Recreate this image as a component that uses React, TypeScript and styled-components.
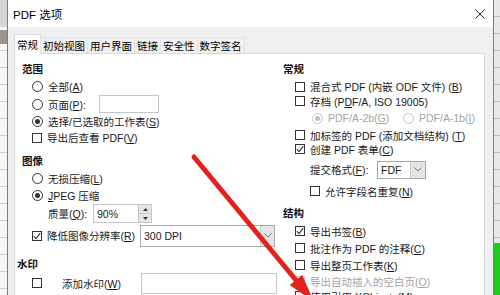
import React from "react";
import styled, { createGlobalStyle } from "styled-components";

const FONT = `"Liberation Sans", "Noto Sans CJK SC", sans-serif`;

const Global = createGlobalStyle`
  html, body { margin: 0; padding: 0; width: 500px; height: 295px; overflow: hidden; background: #fff; }
  body { font-family: ${FONT}; }
`;

const Screen = styled.div`
  position: relative;
  display: flex;
  width: 500px;
  height: 295px;
  overflow: hidden;
  font-family: ${FONT};
  color: #1a1a1a;
`;

const SheetLeft = styled.div`
  width: 7px;
  flex: none;
  background:
    linear-gradient(#d6d6d6, #d6d6d6) 0 0 / 100% 27px no-repeat,
    linear-gradient(#9a948c, #9a948c) 0 30px / 100% 14px no-repeat,
    repeating-linear-gradient(to bottom, #f7f7f7 0 16px, #cfcfcf 16px 17px);
`;

const SheetRight = styled.div`
  width: 6px;
  flex: none;
  background:
    linear-gradient(#1fcb1f, #1fcb1f) 0 243px / 100% 52px no-repeat,
    repeating-linear-gradient(to bottom, #e8e8e8 0 16px, #bdbdbd 16px 17px);
`;

const Dialog = styled.div`
  flex: 1;
  min-width: 0;
  display: flex;
  flex-direction: column;
  border-left: 1px solid #7d7d7d;
  border-right: 1px solid #7d7d7d;
  background: #f0f0f0;
`;

const TitleBar = styled.div`
  height: 27px;
  flex: none;
  background: #fff;
  display: flex;
  align-items: center;
  justify-content: space-between;
  padding: 0 8px 0 5px;
  font-size: 11.5px;
  color: #000;
`;

const Body = styled.div`
  flex: 1;
  display: flex;
  flex-direction: column;
  padding: 7px 8px 0 6px;
`;

const TabBar = styled.div`
  display: flex;
  align-items: flex-end;
  height: 20px;
  margin-bottom: -1px;
  position: relative;
  z-index: 1;
`;

const Tab = styled.div<{ $active?: boolean }>`
  box-sizing: border-box;
  height: ${(p) => (p.$active ? 20 : 16)}px;
  margin-bottom: ${(p) => (p.$active ? 0 : 1)}px;
  margin-right: -1px;
  padding: 0 2px;
  display: flex;
  align-items: center;
  font-size: 10.5px;
  color: #000;
  background: ${(p) => (p.$active ? "#fff" : "#f0f0f0")};
  border: 1px solid ${(p) => (p.$active ? "#d9d9d9" : "#e2e2e2")};
  border-bottom: none;
`;

const Panel = styled.div`
  flex: 1;
  background: #fff;
  border: 1px solid #d9d9d9;
  border-bottom: none;
  display: grid;
  grid-template-columns: 268px 1fr;
  font-size: 10.5px;
  color: #1a1a1a;
`;

const Col = styled.div<{ $pl: number }>`
  display: flex;
  flex-direction: column;
  padding-top: 5px;
  padding-left: ${(p) => p.$pl}px;
`;

const Head = styled.div<{ $mt?: number; $ml?: number }>`
  height: 18px;
  display: flex;
  align-items: center;
  font-weight: bold;
  margin-top: ${(p) => p.$mt ?? 0}px;
  margin-left: ${(p) => p.$ml ?? 0}px;
  color: #111;
`;

const Row = styled.div<{ $h: number; $indent: number; $mt?: number; $disabled?: boolean }>`
  height: ${(p) => p.$h}px;
  margin-top: ${(p) => p.$mt ?? 0}px;
  padding-left: ${(p) => p.$indent}px;
  display: flex;
  align-items: center;
  gap: 5px;
  white-space: nowrap;
  color: ${(p) => (p.$disabled ? "#a3a3a3" : "#1a1a1a")};
`;

const Label = styled.span<{ $w?: number; $ml?: number }>`
  display: inline-block;
  ${(p) => (p.$w ? `width: ${p.$w}px;` : "")}
  margin-left: ${(p) => p.$ml ?? 0}px;
  flex: none;
`;

const U = styled.span`
  text-decoration: underline;
  text-underline-offset: 1px;
`;

const Box = styled.span<{ $disabled?: boolean }>`
  width: 10px;
  height: 10px;
  flex: none;
  box-sizing: border-box;
  border: 1px solid ${(p) => (p.$disabled ? "#c8c8c8" : "#333")};
  background: #fff;
  display: inline-flex;
  align-items: center;
  justify-content: center;
`;

const RadioDot = styled.span<{ $on?: boolean; $disabled?: boolean }>`
  width: 11px;
  height: 11px;
  flex: none;
  box-sizing: border-box;
  border-radius: 50%;
  border: 1px solid ${(p) => (p.$disabled ? "#c4c4c4" : "#333")};
  background: #fff;
  display: inline-flex;
  align-items: center;
  justify-content: center;
  &::after {
    content: "";
    display: ${(p) => (p.$on ? "block" : "none")};
    width: 5px;
    height: 5px;
    border-radius: 50%;
    background: ${(p) => (p.$disabled ? "#bdbdbd" : "#333")};
  }
`;

const Field = styled.div<{ $w: number; $h: number; $border?: string }>`
  width: ${(p) => p.$w}px;
  height: ${(p) => p.$h}px;
  flex: none;
  box-sizing: border-box;
  border: 1px solid ${(p) => p.$border ?? "#c6c6c6"};
  background: #fff;
  display: flex;
  align-items: stretch;
  color: #1a1a1a;
`;

const FieldText = styled.span`
  flex: 1;
  display: flex;
  align-items: center;
  padding-left: 3px;
`;

const DropButton = styled.span<{ $w: number }>`
  width: ${(p) => p.$w}px;
  flex: none;
  background: #e4e4e4;
  border-left: 1px solid #c9c9c9;
  display: flex;
  align-items: center;
  justify-content: center;
`;

const Spinner = styled.span`
  width: 12px;
  flex: none;
  display: flex;
  flex-direction: column;
  background: #e6e6e6;
  border-left: 1px solid #c2c2c2;
`;

const SpinHalf = styled.span<{ $top?: boolean }>`
  flex: 1;
  display: flex;
  align-items: center;
  justify-content: center;
  ${(p) => (p.$top ? "border-bottom: 1px solid #c8c8c8;" : "")}
`;

const Overlay = styled.svg`
  position: absolute;
  left: 0;
  top: 0;
  width: 500px;
  height: 295px;
  pointer-events: none;
`;

const Check = () => (
  <svg width="8" height="8" viewBox="0 0 8 8">
    <path d="M0.8 4.2 L3 6.6 L7.3 1.2" fill="none" stroke="#333" strokeWidth="1.1" />
  </svg>
);

const Chevron = () => (
  <svg width="8" height="5" viewBox="0 0 8 5">
    <path d="M0.5 0.5 L4 4 L7.5 0.5" fill="none" stroke="#7a7a7a" strokeWidth="1" />
  </svg>
);

const Tri = ({ up }: { up?: boolean }) => (
  <svg width="5" height="3" viewBox="0 0 5 3">
    <path d={up ? "M0 3 L2.5 0 L5 3 Z" : "M0 0 L2.5 3 L5 0 Z"} fill="#333" />
  </svg>
);

const CheckBox = ({ on, disabled }: { on?: boolean; disabled?: boolean }) => (
  <Box $disabled={disabled}>{on ? <Check /> : null}</Box>
);

export default function App() {
  return (
    <Screen>
      <Global />
      <SheetLeft />
      <Dialog>
        <TitleBar>
          <span>PDF 选项</span>
          <svg width="10" height="10" viewBox="0 0 10 10">
            <path d="M0.5 0.5 L9.5 9.5 M9.5 0.5 L0.5 9.5" stroke="#222" strokeWidth="1" />
          </svg>
        </TitleBar>
        <Body>
          <TabBar>
            <Tab $active>常规</Tab>
            <Tab>初始视图</Tab>
            <Tab>用户界面</Tab>
            <Tab>链接</Tab>
            <Tab>安全性</Tab>
            <Tab>数字签名</Tab>
          </TabBar>
          <Panel>
            <Col $pl={7}>
              <Head>范围</Head>
              <Row $h={18} $indent={10}>
                <RadioDot />
                <span>全部(<U>A</U>)</span>
              </Row>
              <Row $h={18} $indent={10}>
                <RadioDot />
                <Label $w={46}>页面(<U>P</U>):</Label>
                <Field $w={60} $h={18} />
              </Row>
              <Row $h={17} $indent={10}>
                <RadioDot $on />
                <span>选择/已选取的工作表(<U>S</U>)</span>
              </Row>
              <Row $h={15} $indent={10}>
                <CheckBox />
                <span>导出后查看 PDF(<U>V</U>)</span>
              </Row>
              <Head $mt={6}>图像</Head>
              <Row $h={18} $indent={10}>
                <RadioDot />
                <span>无损压缩(<U>L</U>)</span>
              </Row>
              <Row $h={16} $indent={10}>
                <RadioDot $on />
                <span><U>J</U>PEG 压缩</span>
              </Row>
              <Row $h={21} $indent={26}>
                <Label $w={40}>质量(<U>Q</U>):</Label>
                <Field $w={59} $h={19}>
                  <FieldText>90%</FieldText>
                  <Spinner>
                    <SpinHalf $top><Tri up /></SpinHalf>
                    <SpinHalf><Tri /></SpinHalf>
                  </Spinner>
                </Field>
              </Row>
              <Row $h={23} $indent={10}>
                <CheckBox on />
                <Label $w={88}>降低图像分辨率(<U>R</U>)</Label>
                <Field $w={135} $h={22} $border="#a9a9a9">
                  <FieldText>300 DPI</FieldText>
                  <DropButton $w={13}><Chevron /></DropButton>
                </Field>
              </Row>
              <Head $mt={7} $ml={-5}>水印</Head>
              <Row $h={22} $indent={10}>
                <CheckBox />
                <Label $w={74} $ml={15}>添加水印(<U>W</U>)</Label>
                <Field $w={136} $h={21} />
              </Row>
            </Col>
            <Col $pl={0}>
              <Head>常规</Head>
              <Row $h={15} $indent={12} $mt={2}>
                <CheckBox />
                <span>混合式 PDF (内嵌 ODF 文件) (<U>B</U>)</span>
              </Row>
              <Row $h={14} $indent={12}>
                <CheckBox />
                <span>存档 (P<U>D</U>F/A, ISO 19005)</span>
              </Row>
              <Row $h={20} $indent={29} $disabled>
                <RadioDot $on $disabled />
                <Label $w={70}>PDF/A-2b(<U>G</U>)</Label>
                <RadioDot $disabled />
                <span>PDF/A-1b(<U>I</U>)</span>
              </Row>
              <Row $h={14} $indent={12}>
                <CheckBox />
                <span>加标签的 PDF (添加文档结构) (<U>T</U>)</span>
              </Row>
              <Row $h={14} $indent={12}>
                <CheckBox on />
                <span>创建 PDF 表单(<U>C</U>)</span>
              </Row>
              <Row $h={19} $indent={27} $mt={4}>
                <Label $w={62}>提交格式(<U>F</U>):</Label>
                <Field $w={49} $h={18} $border="#a9a9a9">
                  <FieldText>FDF</FieldText>
                  <DropButton $w={14}><Chevron /></DropButton>
                </Field>
              </Row>
              <Row $h={18} $indent={27} $mt={3}>
                <CheckBox />
                <span>允许字段名重复(<U>N</U>)</span>
              </Row>
              <Head $mt={3}>结构</Head>
              <Row $h={18} $indent={12} $mt={1}>
                <CheckBox on />
                <span>导出书签(<U>B</U>)</span>
              </Row>
              <Row $h={16} $indent={12}>
                <CheckBox />
                <span>批注作为 PDF 的注释(<U>C</U>)</span>
              </Row>
              <Row $h={18} $indent={12}>
                <CheckBox />
                <span>导出整页工作表(<U>K</U>)</span>
              </Row>
              <Row $h={14} $indent={12} $disabled>
                <CheckBox disabled />
                <span>导出自动插入的空白页(<U>O</U>)</span>
              </Row>
              <Row $h={16} $indent={12}>
                <CheckBox />
                <span>使用引用 XObjects(<U>M</U>)</span>
              </Row>
            </Col>
          </Panel>
        </Body>
      </Dialog>
      <SheetRight />
      <Overlay viewBox="0 0 500 295">
        <line x1="194" y1="157" x2="300" y2="285" stroke="#e3221f" strokeWidth="5" strokeLinecap="round" />
        <polygon points="302.2,274.9 289.8,285.1 314,302" fill="#e3221f" />
      </Overlay>
    </Screen>
  );
}
